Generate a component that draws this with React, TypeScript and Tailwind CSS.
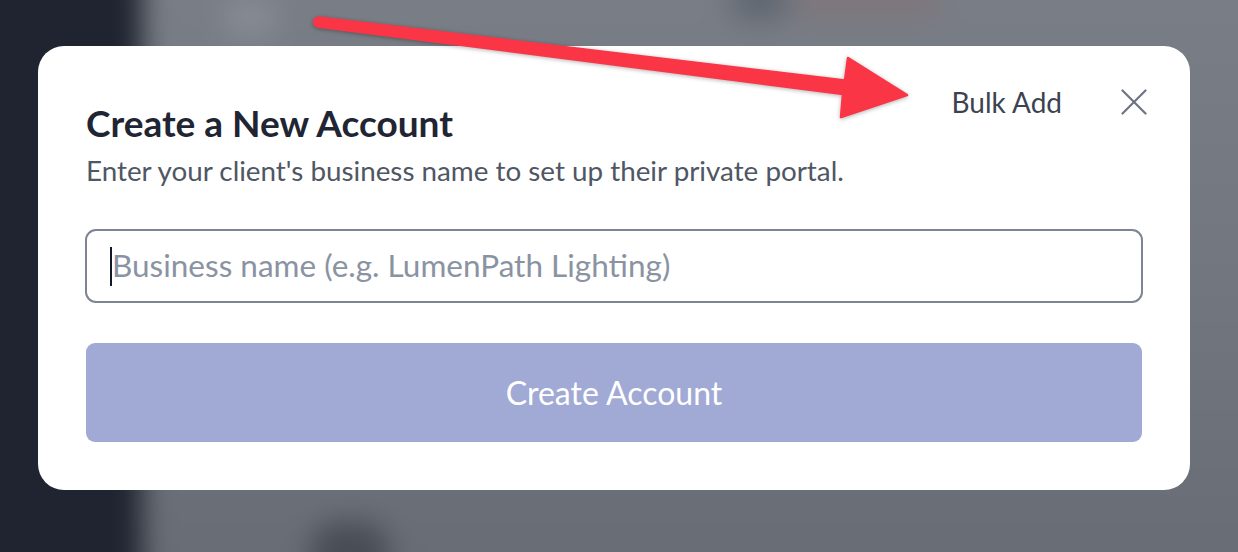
import React from 'react';

function CloseIcon() {
  return (
    <svg viewBox="0 0 26 26" className="h-[26px] w-[26px]" fill="none" stroke="currentColor" strokeWidth={2.2} strokeLinecap="round">
      <line x1="1.5" y1="1.5" x2="24.5" y2="24.5" />
      <line x1="24.5" y1="1.5" x2="1.5" y2="24.5" />
    </svg>
  );
}

// blurred app sitting under the dialog overlay
function Backdrop() {
  return (
    <div className="absolute -inset-10 blur-[14px]">
      <div className="flex h-full">
        <div className="w-[182px] bg-[#1f2430]" />
        <div className="flex-1 bg-gradient-to-b from-[#7a7e86] via-[#72767e] to-[#676b73]" />
      </div>
      <div className="absolute left-[262px] top-[38px] h-[40px] w-[56px] rounded-full bg-[#878b93]" />
      <div className="absolute left-[770px] top-[20px] h-[40px] w-[60px] rounded-full bg-[#5f6670]" />
      <div className="absolute left-[835px] top-[18px] h-[40px] w-[145px] rounded-full bg-[#7f767c]" />
      <div className="absolute left-[350px] top-[562px] h-[60px] w-[80px] rounded-full bg-[#474c55]" />
    </div>
  );
}

function Arrow() {
  return (
    <svg
      className="pointer-events-none absolute inset-0 drop-shadow-[0_1px_2px_rgba(0,0,0,0.3)]"
      width={1238}
      height={552}
      viewBox="0 0 1238 552"
    >
      <polygon
        points="318.6,17.6 845,80.5 848,58 907,95 841,117 843,94 317.4,26.4"
        fill="#fa3546"
        stroke="#fa3546"
        strokeWidth={2.5}
        strokeLinejoin="round"
      />
      <circle cx="318" cy="22" r="5.2" fill="#fa3546" />
    </svg>
  );
}

export default function App() {
  return (
    <div className="relative h-[552px] w-[1238px] overflow-hidden bg-[#72767e] font-['Lato','Noto_Sans',sans-serif]">
      <Backdrop />

      <div className="relative flex h-full items-start pl-[38px] pt-[46px]">
        <div className="w-[1152px] rounded-[26px] bg-white px-12 pb-[48px] pt-[43px]">
          <div className="flex items-start justify-between">
            <div className="pt-[12px]">
              <h2 className="text-[37px] font-bold leading-[44px] text-[#1f2533]">Create a New Account</h2>
              <p className="mt-[10px] text-[27.8px] leading-[32px] text-[#4f5664]">
                Enter your client's business name to set up their private portal.
              </p>
            </div>
            <div className="-mr-[5px] flex items-center gap-[59px]">
              <button className="text-[28px] leading-[26px] text-[#3c4350]">Bulk Add</button>
              <button className="text-[#6b7280]" aria-label="Close">
                <CloseIcon />
              </button>
            </div>
          </div>

          <div className="-mx-px mt-[42px] flex h-[74px] items-center rounded-[11px] border-2 border-[#7d8592] pl-[23px]">
            <span className="h-[39px] w-[2px] bg-[#111827]" />
            <span className="text-[31.5px] text-[#8a93a2]">Business name (e.g. LumenPath Lighting)</span>
          </div>

          <button className="mt-[40px] flex h-[99px] w-full items-center justify-center rounded-[9px] bg-[#a1aad4] text-[32px] text-white">
            Create Account
          </button>
        </div>
      </div>

      <Arrow />
    </div>
  );
}
